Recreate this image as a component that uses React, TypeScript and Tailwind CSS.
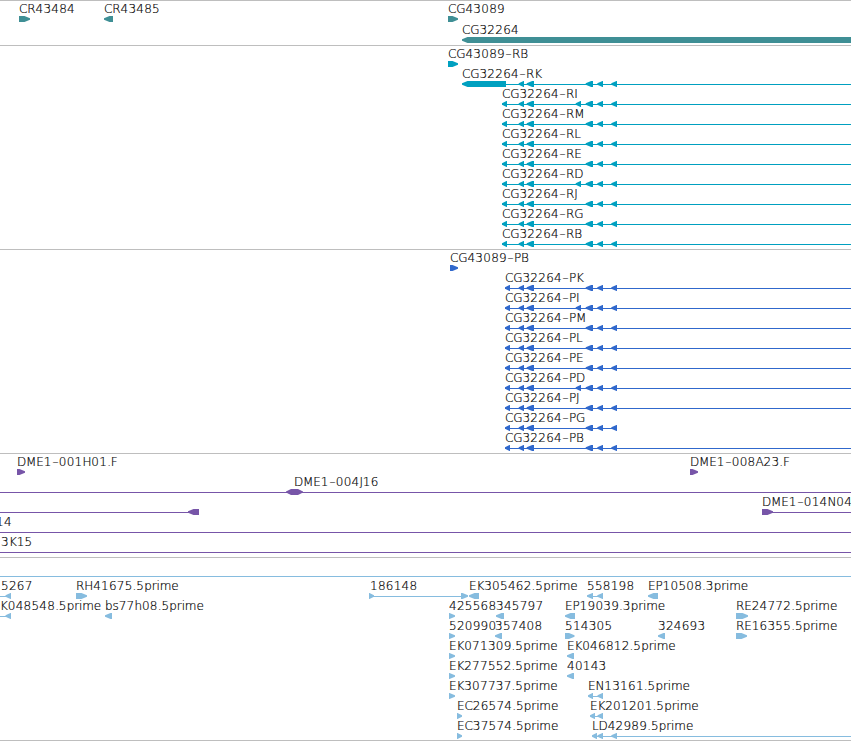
import React from "react";

type Arrow = [number, number, "l" | "r" | "b"];
type Line = [number, number];

interface Row {
  labels?: [number, string][];
  arrows?: Arrow[];
  lines?: Line[];
}

interface TrackProps {
  rows: Row[];
  color: string;
  rowClass?: string;
  className?: string;
}

const END = 851;

// exons shared by most of the CG32264 isoforms
const exons: Arrow[] = [
  [518.7, 524, "l"],
  [526.7, 534, "l"],
  [585.7, 593, "l"],
  [597.3, 603, "l"],
  [611.3, 617, "l"],
];
const extraExon: Arrow = [575.7, 581, "l"];

const isoform = (name: string, start: number, end = END, extra = false): Row => ({
  labels: [[start, name]],
  lines: [[start, end]],
  arrows: [[start, start + 5, "l"], ...exons, ...(extra ? [extraExon] : [])],
});

const genes: Row[] = [
  {
    labels: [[19, "CR43484"], [104, "CR43485"], [448, "CG43089"]],
    arrows: [[19, 30, "r"], [104, 113, "l"], [448, 458, "r"]],
  },
  { labels: [[462, "CG32264"]], arrows: [[462, 860, "l"]] },
];

const transcripts: Row[] = [
  { labels: [[448, "CG43089-RB"]], arrows: [[448, 458, "r"]] },
  {
    labels: [[462, "CG32264-RK"]],
    lines: [[506, END]],
    arrows: [[462, 506, "l"], ...exons],
  },
  isoform("CG32264-RI", 502, END, true),
  isoform("CG32264-RM", 502),
  isoform("CG32264-RL", 502),
  isoform("CG32264-RE", 502),
  isoform("CG32264-RD", 502, END, true),
  isoform("CG32264-RJ", 502),
  isoform("CG32264-RG", 502),
  isoform("CG32264-RB", 502),
];

const proteins: Row[] = [
  { labels: [[450, "CG43089-PB"]], arrows: [[450, 458, "r"]] },
  isoform("CG32264-PK", 505),
  isoform("CG32264-PI", 505, END, true),
  isoform("CG32264-PM", 505),
  isoform("CG32264-PL", 505),
  isoform("CG32264-PE", 505),
  isoform("CG32264-PD", 505, END, true),
  isoform("CG32264-PJ", 505),
  isoform("CG32264-PG", 505, 616),
  isoform("CG32264-PB", 505),
];

const clones: Row[] = [
  {
    labels: [[17, "DME1-001H01.F"], [690, "DME1-008A23.F"]],
    arrows: [[17, 25, "r"], [690, 698, "r"]],
  },
  { labels: [[294, "DME1-004J16"]], lines: [[0, END]], arrows: [[286, 303, "b"]] },
  {
    labels: [[762, "DME1-014N04"]],
    lines: [[0, 190], [770, END]],
    arrows: [[188, 199, "l"], [762, 773, "r"]],
  },
  { labels: [[-4, "14"]], lines: [[0, END]] },
  { labels: [[1, "3K15"]], lines: [[0, END]] },
];

const ests: Row[] = [
  {
    labels: [
      [1, "5267"],
      [76, "RH41675.5prime"],
      [370, "186148"],
      [469, "EK305462.5prime"],
      [587, "558198"],
      [648, "EP10508.3prime"],
    ],
    lines: [[0, 6], [370, 465], [588, 602]],
    arrows: [
      [5.5, 11, "l"],
      [76, 87, "r"],
      [369, 374, "r"],
      [461, 468, "r"],
      [469, 479, "l"],
      [587, 593, "l"],
      [597.3, 603, "l"],
      [648, 658, "l"],
    ],
  },
  {
    labels: [
      [0, "K048548.5prime"],
      [105, "bs77h08.5prime"],
      [449, "425568"],
      [496, "345797"],
      [565, "EP19039.3prime"],
      [736, "RE24772.5prime"],
    ],
    lines: [[0, 6]],
    arrows: [
      [5.5, 11, "l"],
      [105, 112, "l"],
      [449, 455, "r"],
      [496, 504, "l"],
      [565, 575, "l"],
      [736, 748, "r"],
    ],
  },
  {
    labels: [
      [449, "520990"],
      [495, "357408"],
      [565, "514305"],
      [658, "324693"],
      [736, "RE16355.5prime"],
    ],
    arrows: [
      [449, 455, "r"],
      [495, 502, "l"],
      [565, 574.5, "r"],
      [658, 665, "l"],
      [736, 747, "r"],
    ],
  },
  {
    labels: [[449, "EK071309.5prime"], [567, "EK046812.5prime"]],
    arrows: [[449, 455, "r"], [567, 574, "l"]],
  },
  {
    labels: [[449, "EK277552.5prime"], [567, "40143"]],
    arrows: [[449, 455, "r"], [567, 574, "l"]],
  },
  {
    labels: [[449, "EK307737.5prime"], [588, "EN13161.5prime"]],
    lines: [[589, 602]],
    arrows: [[449, 455, "r"], [588, 593, "l"], [597.5, 603, "l"]],
  },
  {
    labels: [[457, "EC26574.5prime"], [590, "EK201201.5prime"]],
    lines: [[591, 602]],
    arrows: [[457, 462, "r"], [590, 595, "l"], [597.5, 603, "l"]],
  },
  {
    labels: [[457, "EC37574.5prime"], [592, "LD42989.5prime"]],
    lines: [[593, END]],
    arrows: [[457, 462, "r"], [592, 597, "l"], [597.5, 603, "l"], [611.3, 617, "l"]],
  },
];

const arrowPoints = ([x0, x1, dir]: Arrow): string => {
  const head = Math.min(x1 - x0 - 0.5, 5.5);
  if (dir === "l") {
    return `${x0},3.8 ${x0},2.2 ${x0 + head},0 ${x1},0 ${x1},6 ${x0 + head},6`;
  }
  if (dir === "r") {
    return `${x0},0 ${x1 - head},0 ${x1},2.2 ${x1},3.8 ${x1 - head},6 ${x0},6`;
  }
  return `${x0},2.5 ${x0 + 5},0 ${x1 - 5},0 ${x1},2.5 ${x1},3.5 ${x1 - 5},6 ${x0 + 5},6 ${x0},3.5`;
};

// digits are set a little wider than the letters
const Label = ({ x, text }: { x: number; text: string }) => (
  <span className="absolute top-0 whitespace-pre leading-4" style={{ left: x }}>
    {text.split(/(-|\d+)/).map((part, i) => {
      if (part === "-") {
        return <span key={i} className="inline-block w-[7px] scale-x-150 text-center">-</span>;
      }
      return /\d/.test(part) ? <span key={i} className="tracking-[0.26px]">{part}</span> : part;
    })}
  </span>
);

const Track: React.FC<TrackProps> = ({ rows, color, rowClass = "h-5", className }) => (
  <section className={`w-full border-b border-[#bebebe] ${className ?? ""}`}>
    {rows.map((row, i) => (
      <div key={i} className={`relative w-full pt-[15px] ${rowClass}`}>
        <svg className={`block h-[6px] w-[851px] ${color}`} viewBox="0 0 851 6" fill="currentColor" overflow="visible">
          {row.lines?.map(([x0, x1], j) => (
            <rect key={j} x={x0} y={3} width={x1 - x0} height={1} />
          ))}
          {row.arrows?.map((arrow, j) => (
            <polygon key={j} points={arrowPoints(arrow)} />
          ))}
        </svg>
        {row.labels?.map(([x, text]) => (
          <Label key={text} x={x} text={text} />
        ))}
      </div>
    ))}
  </section>
);

const App: React.FC = () => {
  return (
    <main className="h-[741px] w-[851px] overflow-hidden border-t border-[#bebebe] bg-white font-['DejaVu_Sans',sans-serif] text-[12px] font-extralight tracking-[-0.12px] text-black [-webkit-text-stroke:0.2px_black]">
      <Track rows={genes} color="text-[#3f8f95]" rowClass="h-[21px]" className="h-[45px]" />
      <Track rows={transcripts} color="text-[#00a0c0]" className="h-[204px]" />
      <Track rows={proteins} color="text-[#3068cc]" className="h-[204px]" />
      <Track rows={clones} color="text-[#7755a8]" className="h-[104px]" />
      <div className="h-5 w-full pt-[18px]">
        <div className="h-px w-full bg-[#86bcdf]" />
      </div>
      <Track rows={ests} color="text-[#86bcdf]" className="h-[163px]" />
    </main>
  );
};

export default App;
